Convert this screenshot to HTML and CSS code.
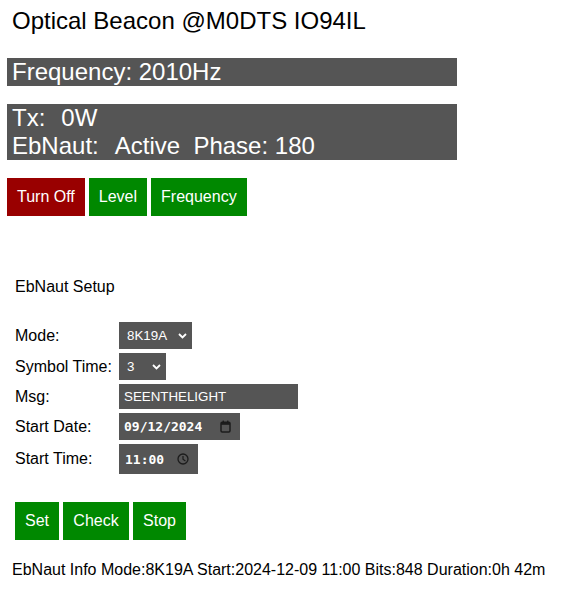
FILE: index.html
```html
<!DOCTYPE html>
<html lang="en">
<head>
<meta charset="utf-8">
<title>Optical Beacon</title>
<link rel="stylesheet" href="styles.css">
</head>
<body>
<div class="page">
  <h1 class="title">Optical Beacon @M0DTS IO94IL</h1>
  <div class="bar freq">Frequency: 2010Hz</div>
  <div class="bar status">
    <div>Tx:<span class="val">0W</span></div>
    <div>EbNaut:<span class="val">Active&nbsp; Phase: 180</span></div>
  </div>
  <div class="actions">
    <button class="btn btn-red">Turn Off</button>
    <button class="btn btn-green">Level</button>
    <button class="btn btn-green">Frequency</button>
  </div>

  <section class="setup">
    <div class="setup-title">EbNaut Setup</div>
    <div class="form">
      <label class="lbl">Mode:</label>
      <div class="ctl ctl-mode">
        <select class="sel"><option>8K19A</option></select>
        <svg class="chev" width="9" height="6" viewBox="0 0 9 6"><path d="M1 1 L4.5 4.5 L8 1" fill="none" stroke="#fff" stroke-width="1.8"/></svg>
      </div>

      <label class="lbl">Symbol Time:</label>
      <div class="ctl ctl-sym">
        <select class="sel"><option>3</option></select>
        <svg class="chev" width="9" height="6" viewBox="0 0 9 6"><path d="M1 1 L4.5 4.5 L8 1" fill="none" stroke="#fff" stroke-width="1.8"/></svg>
      </div>

      <label class="lbl">Msg:</label>
      <div class="ctl ctl-msg">
        <input class="inp" type="text" value="SEENTHELIGHT">
      </div>

      <label class="lbl">Start Date:</label>
      <div class="ctl ctl-date">
        <input class="inp mono" type="text" value="09/12/2024">
        <svg class="ico-cal" width="11" height="13" viewBox="0 0 11 13"><rect x="1" y="2.2" width="9" height="9.8" rx="1.2" fill="none" stroke="#1c1c1c" stroke-width="1.5"/><rect x="1" y="2.2" width="9" height="2.6" fill="#1c1c1c"/><rect x="2.6" y="0.6" width="1.4" height="2" fill="#1c1c1c"/><rect x="7" y="0.6" width="1.4" height="2" fill="#1c1c1c"/></svg>
      </div>

      <label class="lbl">Start Time:</label>
      <div class="ctl ctl-time">
        <input class="inp mono" type="text" value="11:00">
        <svg class="ico-clock" width="12" height="12" viewBox="0 0 12 12"><circle cx="6" cy="6" r="5" fill="none" stroke="#1c1c1c" stroke-width="1.3"/><path d="M6 3 V6.3 L8.4 8" fill="none" stroke="#1c1c1c" stroke-width="1.2"/></svg>
      </div>
    </div>

    <div class="actions setup-actions">
      <button class="btn btn-green">Set</button>
      <button class="btn btn-green btn-check">Check</button>
      <button class="btn btn-green">Stop</button>
    </div>
  </section>

  <p class="info">EbNaut Info Mode:8K19A Start:2024-12-09 11:00 Bits:848 Duration:0h 42m</p>
</div>
</body>
</html>
```

FILE: styles.css
```css
html, body {
  margin: 0;
  padding: 0;
  background: #fff;
}

body {
  font-family: "Liberation Sans", Arial, sans-serif;
  color: #000;
}

.page {
  padding: 7px 0 0 7px;
}

.title {
  margin: 0;
  padding-left: 5px;
  font-size: 24px;
  font-weight: normal;
  line-height: 28px;
}

.bar {
  width: 445px;
  padding-left: 5px;
  background: #555555;
  color: #fff;
  font-size: 24px;
  line-height: 28px;
}

.bar .val {
  margin-left: 16px;
}

.freq {
  margin-top: 23px;
}

.status {
  margin-top: 18px;
}

.actions {
  display: flex;
  gap: 4px;
  margin-top: 18px;
}

.btn {
  height: 38px;
  padding: 0 10px;
  border: none;
  color: #fff;
  font-family: "Liberation Sans", Arial, sans-serif;
  font-size: 16px;
  line-height: 38px;
  cursor: pointer;
}

.btn-check {
  width: 66px;
}

.btn-red {
  background: #990000;
}

.btn-green {
  background: #008800;
}

.setup {
  padding-left: 8px;
}

.setup-title {
  margin-top: 62px;
  font-size: 16px;
  line-height: 18px;
}

.form {
  display: grid;
  grid-template-columns: 104px auto;
  justify-content: start;
  row-gap: 4px;
  margin-top: 26px;
  align-items: center;
}

.lbl {
  font-size: 16px;
  line-height: 18px;
}

.ctl {
  display: flex;
  align-items: center;
  background: #555555;
  color: #fff;
}

.ctl-mode { width: 73px; height: 27px; }
.ctl-sym  { width: 47px; height: 27px; }
.ctl-msg  { width: 179px; height: 25px; }
.ctl-date { width: 121px; height: 27px; }
.ctl-time { width: 79px; height: 30px; }

.sel {
  appearance: none;
  -webkit-appearance: none;
  flex: 1;
  min-width: 0;
  height: 100%;
  margin: 0;
  padding: 0 0 0 8px;
  border: none;
  outline: none;
  background: transparent;
  color: #fff;
  font-family: "Liberation Sans", Arial, sans-serif;
  font-size: 13.33px;
  font-weight: normal;
}

.sel option {
  background: #555555;
  color: #fff;
}

.chev {
  flex: none;
  margin-right: 5px;
}

.inp {
  flex: 1;
  min-width: 0;
  height: 100%;
  margin: 0;
  padding: 0 0 0 5px;
  border: none;
  outline: none;
  background: transparent;
  color: #fff;
  font-family: "Liberation Sans", Arial, sans-serif;
  font-size: 13.33px;
  font-weight: normal;
}

.inp.mono {
  font-family: "DejaVu Sans Mono", "Liberation Mono", monospace;
  font-size: 13px;
  font-weight: bold;
  padding-left: 5px;
}

.ctl-time .inp.mono {
  padding-left: 6px;
}

.ico-cal {
  flex: none;
  margin-right: 9px;
}

.ico-clock {
  flex: none;
  margin-right: 9px;
}

.setup-actions {
  margin-top: 28px;
}

.info {
  margin: 21px 0 0 5px;
  font-size: 16px;
  line-height: 18px;
}
```
